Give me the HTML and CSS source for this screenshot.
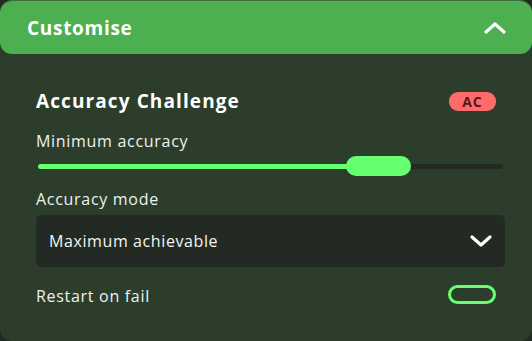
FILE: index.html
```html
<!DOCTYPE html>
<html>
<head>
<meta charset="utf-8">
<link rel="stylesheet" href="styles.css">
</head>
<body>
<div class="card">
  <div class="header">
    <span class="header-title">Customise</span>
    <svg class="chev" width="22" height="12" viewBox="0 0 22 12"><path d="M2 10 L11 2 L20 10" fill="none" stroke="#fff" stroke-width="3.2" stroke-linecap="round" stroke-linejoin="round"/></svg>
  </div>
  <div class="body">
    <div class="title-row">
      <span class="section-title">Accuracy Challenge</span>
      <span class="badge">AC</span>
    </div>
    <div class="label">Minimum accuracy</div>
    <div class="slider">
      <div class="track"><div class="fill" style="width: 68%"></div></div>
      <div class="thumb" style="left: 66.2%"></div>
    </div>
    <div class="label mode-label">Accuracy mode</div>
    <div class="select">
      <span>Maximum achievable</span>
      <svg width="22" height="12" viewBox="0 0 22 12"><path d="M2 2 L11 10 L20 2" fill="none" stroke="#fff" stroke-width="3.2" stroke-linecap="round" stroke-linejoin="round"/></svg>
    </div>
    <div class="toggle-row">
      <span class="label toggle-label">Restart on fail</span>
      <span class="toggle"></span>
    </div>
  </div>
</div>
</body>
</html>
```
FILE: styles.css
```css
html, body {
  margin: 0;
  padding: 0;
  background: #1f2b20;
}
body {
  width: 532px;
  height: 341px;
  font-family: "Open Sans", "Noto Sans", sans-serif;
  color: #f2f5f2;
}
.card {
  width: 532px;
  height: 341px;
  box-sizing: border-box;
  background: #2c3d2c;
  border-radius: 12px;
  border-top: 1px solid #3b6b3f;
  display: flex;
  flex-direction: column;
}
.header {
  height: 53px;
  background: #4caf50;
  border-radius: 12px;
  display: flex;
  align-items: center;
  justify-content: space-between;
  padding: 0 26px 0 27px;
  box-sizing: border-box;
}
.header-title {
  font-size: 19px;
  font-weight: 700;
  color: #fff;
  letter-spacing: 0.7px;
}
.chev { display: block; }
.body {
  padding: 33px 27px 0 36px;
  display: flex;
  flex-direction: column;
}
.title-row {
  display: flex;
  align-items: center;
  justify-content: space-between;
  height: 28px;
  padding-right: 9px;
}
.section-title {
  font-size: 19px;
  font-weight: 700;
  color: #fff;
  letter-spacing: 1.1px;
}
.badge {
  background: #ff6b6b;
  color: #5a1620;
  font-size: 14px;
  font-weight: 700;
  border-radius: 9px;
  width: 47px;
  height: 19px;
  display: flex;
  align-items: center;
  justify-content: center;
  letter-spacing: 1px;
}
.label {
  font-size: 16px;
  color: #eef2ee;
  letter-spacing: 0.7px;
}
.title-row + .label {
  margin-top: 15px;
}
.slider {
  position: relative;
  height: 20px;
  margin: 4px 2px 0 2px;
  display: flex;
  align-items: center;
}
.track {
  width: 100%;
  height: 5px;
  border-radius: 3px;
  background: #222a22;
}
.fill {
  height: 5px;
  border-radius: 3px;
  background: #66ff70;
}
.thumb {
  position: absolute;
  top: 0;
  width: 65px;
  height: 20px;
  border-radius: 10px;
  background: #66ff70;
}
.mode-label {
  margin-top: 12px;
}
.select {
  margin-top: 5px;
  height: 52px;
  background: #232a24;
  border-radius: 5px;
  display: flex;
  align-items: center;
  justify-content: space-between;
  padding: 0 13px 0 13px;
  font-size: 16px;
  letter-spacing: 0.6px;
  color: #f2f5f2;
}
.select svg { display: block; }
.toggle-row {
  margin-top: 14px;
  padding-right: 9px;
  display: flex;
  align-items: center;
  justify-content: space-between;
}
.toggle-label {
  padding-top: 4px;
}
.toggle {
  width: 48px;
  height: 19px;
  box-sizing: border-box;
  border: 3px solid #66ff70;
  border-radius: 10px;
}
```
